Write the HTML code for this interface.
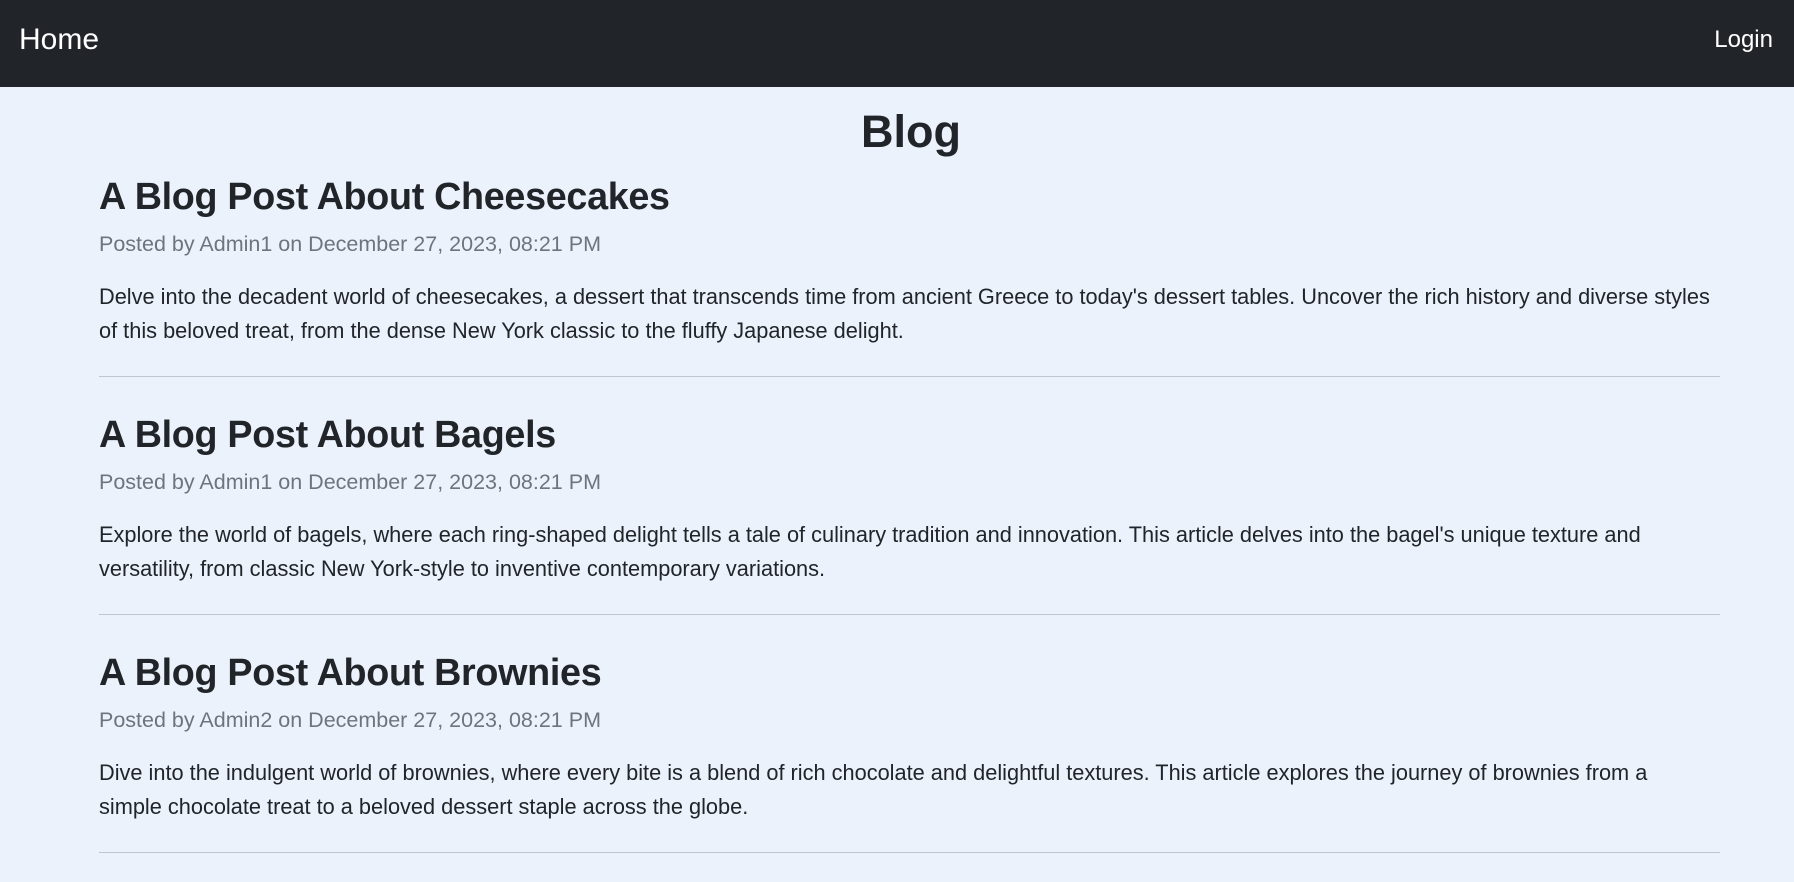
<!DOCTYPE html>
<html><head><meta charset="utf-8"><style>
*{margin:0;padding:0;box-sizing:border-box}
body{width:1794px;height:882px;overflow:hidden;background:#ebf2fc;font-family:"Liberation Sans",sans-serif;color:#212529;position:relative}
.nav{position:absolute;left:0;top:0;width:1794px;height:87px;background:#212529}
.a{position:absolute;white-space:nowrap}
.home{left:19px;top:22px;font-size:30px;line-height:36px;color:#fff}
.login{right:21px;top:24px;font-size:24px;line-height:32px;color:#fff}
.h1{left:14px;width:1794px;text-align:center;top:101px;font-size:45px;line-height:62px;font-weight:bold}
.t{left:99px;font-size:37.7px;line-height:50px;font-weight:bold;letter-spacing:-0.3px}
.m{left:99px;font-size:21.5px;line-height:26px;color:#6c757d}
.p{left:99px;font-size:21.75px;line-height:34px}
.hr{position:absolute;left:99px;width:1621px;height:1px;background:#c2c6cc}
</style></head><body>
<div class="nav"></div>
<div class="a home">Home</div>
<div class="a login">Login</div>
<div class="a h1">Blog</div>

<div class="a t" style="top:171px">A Blog Post About Cheesecakes</div>
<div class="a m" style="top:231px">Posted by Admin1 on December 27, 2023, 08:21 PM</div>
<div class="a p" style="top:280px">Delve into the decadent world of cheesecakes, a dessert that transcends time from ancient Greece to today's dessert tables. Uncover the rich history and diverse styles<br>of this beloved treat, from the dense New York classic to the fluffy Japanese delight.</div>
<div class="hr" style="top:376px"></div>

<div class="a t" style="top:409px">A Blog Post About Bagels</div>
<div class="a m" style="top:469px">Posted by Admin1 on December 27, 2023, 08:21 PM</div>
<div class="a p" style="top:518px">Explore the world of bagels, where each ring-shaped delight tells a tale of culinary tradition and innovation. This article delves into the bagel's unique texture and<br>versatility, from classic New York-style to inventive contemporary variations.</div>
<div class="hr" style="top:614px"></div>

<div class="a t" style="top:647px">A Blog Post About Brownies</div>
<div class="a m" style="top:707px">Posted by Admin2 on December 27, 2023, 08:21 PM</div>
<div class="a p" style="top:756px">Dive into the indulgent world of brownies, where every bite is a blend of rich chocolate and delightful textures. This article explores the journey of brownies from a<br>simple chocolate treat to a beloved dessert staple across the globe.</div>
<div class="hr" style="top:852px"></div>
</body></html>
